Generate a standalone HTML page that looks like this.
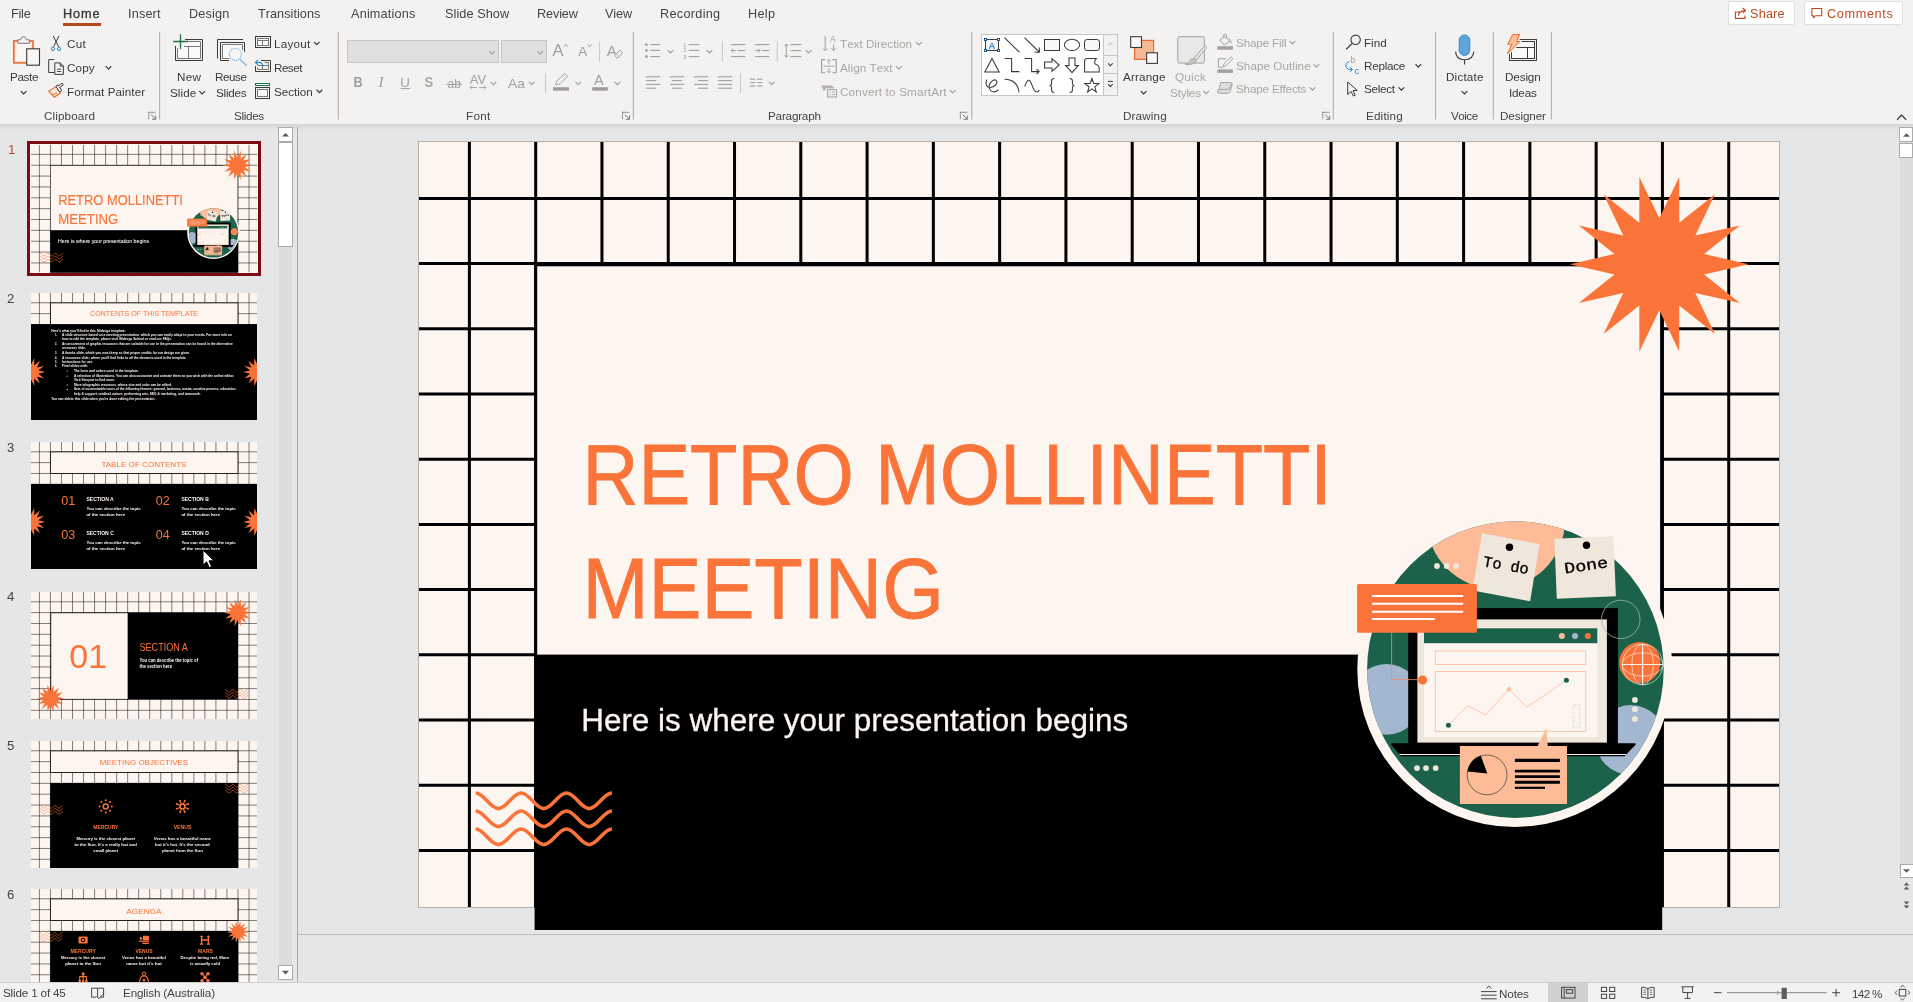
<!DOCTYPE html><html><head><meta charset="utf-8"><title>PowerPoint</title><style>
html,body{margin:0;padding:0}
body{width:1913px;height:1002px;position:relative;overflow:hidden;background:#e6e6e6;font-family:"Liberation Sans",sans-serif;}
.t{position:absolute;white-space:nowrap;line-height:16px;font-kerning:none;will-change:transform}
.abs{position:absolute}
svg{will-change:transform}
#ribbon{position:absolute;left:0;top:0;width:1913px;height:124px;background:#f3f2f1}
#rshadow{position:absolute;left:0;top:124px;width:1913px;height:6px;background:linear-gradient(#d4d4d4,#e6e6e6)}
#status{position:absolute;left:0;top:982px;width:1913px;height:20px;background:#f3f2f1;border-top:1px solid #d0d0d0;box-sizing:border-box}
.btn{position:absolute;top:1px;height:23.5px;background:#fff;border:1px solid #e1dfdd;border-radius:2px;box-sizing:border-box}
.sbx{position:absolute;background:#fff;border:1px solid #ababab;box-sizing:border-box}
.trk{position:absolute;background:#dcdcdc}
</style></head><body>
<div id="ribbon"></div><div id="rshadow"></div>
<div class="abs" style="left:62.9px;top:23.2px;width:38.1px;height:2.6px;background:#B7491F"></div>
<div class="btn" style="left:1728px;width:67px"></div><div class="btn" style="left:1804px;width:99px"></div>
<div class="abs" style="left:347.2px;top:40.1px;width:151.7px;height:22.6px;background:#e1dfdd;border:1px solid #c8c6c4;box-sizing:border-box"></div>
<div class="abs" style="left:501px;top:40.1px;width:45.9px;height:22.6px;background:#e1dfdd;border:1px solid #c8c6c4;box-sizing:border-box"></div>
<div class="abs" style="left:981.3px;top:34.2px;width:136.5px;height:61.7px;background:#fff;border:1px solid #c8c6c4;box-sizing:border-box"></div>
<div class="abs" style="left:1103.1px;top:35.2px;width:13.7px;height:59.7px;background:#f3f2f1"></div>
<div class="abs" style="left:1103.1px;top:55.2px;width:14.7px;height:18.5px;border:1px solid #c8c6c4;box-sizing:border-box"></div>
<div class="abs" style="left:1103.1px;top:74.4px;width:14.7px;height:21.5px;border:1px solid #c8c6c4;border-top:none;box-sizing:border-box"></div>
<div class="abs" style="left:1102.6px;top:34.2px;width:1px;height:61.7px;background:#c8c6c4"></div>
<div class="abs" style="left:297px;top:127px;width:1px;height:855px;background:#a9a9a9"></div>
<div class="abs" style="left:298px;top:934px;width:1615px;height:1px;background:#bdbdbd"></div>
<div class="abs" style="left:418px;top:141px;width:1362px;height:767px;background:#b4b0ae"></div>
<svg class="abs" style="left:419px;top:142px;overflow:visible" width="1360" height="765" viewBox="0 0 1360 765" font-family="Liberation Sans, sans-serif"><g id="s1"><rect width="1360" height="765" fill="#FCF5F0"/>
<path d="M50.40,0V765M116.68,0V765M182.96,0V765M249.24,0V765M315.52,0V765M381.80,0V765M448.08,0V765M514.36,0V765M580.64,0V765M646.92,0V765M713.20,0V765M779.48,0V765M845.76,0V765M912.04,0V765M978.32,0V765M1044.60,0V765M1110.88,0V765M1177.16,0V765M1243.44,0V765M1309.72,0V765M0,56.40H1360M0,121.60H1360M0,186.80H1360M0,252.00H1360M0,317.20H1360M0,382.40H1360M0,447.60H1360M0,512.80H1360M0,578.00H1360M0,643.20H1360M0,708.40H1360" stroke="#000" stroke-width="3" fill="none"/>
<rect x="115.2" y="120.1" width="1128.9" height="400" fill="#000"/>
<rect x="118.2" y="124.3" width="1122.9" height="390" fill="#FCF5F0"/>
<rect x="115.2" y="512.6" width="1128.9" height="252.6" fill="#000"/><rect x="115.6" y="765" width="1127.6" height="23" fill="#000"/>
<text x="163.4" y="361.9" font-size="85.3" fill="#FA7439" stroke="#FA7439" stroke-width="0.8" textLength="749.5" lengthAdjust="spacingAndGlyphs">RETRO MOLLINETTI</text>
<text x="163.4" y="475.6" font-size="85.3" fill="#FA7439" stroke="#FA7439" stroke-width="0.8" textLength="361.5" lengthAdjust="spacingAndGlyphs">MEETING</text>
<text x="162.2" y="588.9" font-size="30.8" fill="#FCF5F0" stroke="#FCF5F0" stroke-width="0.3" textLength="547" lengthAdjust="spacingAndGlyphs">Here is where your presentation begins</text>
<path d="M56.7,651.0 C65.0,651.0 71.1,666.6 79.4,666.6 C87.7,666.6 93.8,651.0 102.1,651.0 C110.4,651.0 116.5,666.6 124.8,666.6 C133.1,666.6 139.2,651.0 147.5,651.0 C155.8,651.0 161.9,666.6 170.2,666.6 C178.5,666.6 184.6,651.0 192.9,651.0" stroke="#FA7439" stroke-width="3.6" fill="none"/>
<path d="M56.7,669.0 C65.0,669.0 71.1,684.6 79.4,684.6 C87.7,684.6 93.8,669.0 102.1,669.0 C110.4,669.0 116.5,684.6 124.8,684.6 C133.1,684.6 139.2,669.0 147.5,669.0 C155.8,669.0 161.9,684.6 170.2,684.6 C178.5,684.6 184.6,669.0 192.9,669.0" stroke="#FA7439" stroke-width="3.6" fill="none"/>
<path d="M56.7,687.0 C65.0,687.0 71.1,702.6 79.4,702.6 C87.7,702.6 93.8,687.0 102.1,687.0 C110.4,687.0 116.5,702.6 124.8,702.6 C133.1,702.6 139.2,687.0 147.5,687.0 C155.8,687.0 161.9,702.6 170.2,702.6 C178.5,702.6 184.6,687.0 192.9,687.0" stroke="#FA7439" stroke-width="3.6" fill="none"/>
<polygon points="1329.7,122.2 1285.1,132.4 1320.8,161.0 1276.3,150.9 1296.0,192.1 1260.3,163.6 1260.2,209.4 1240.3,168.2 1220.4,209.4 1220.3,163.6 1184.6,192.1 1204.3,150.9 1159.8,161.0 1195.5,132.4 1150.9,122.2 1195.5,112.0 1159.8,83.4 1204.3,93.5 1184.6,52.3 1220.3,80.8 1220.4,35.0 1240.3,76.2 1260.2,35.0 1260.3,80.8 1296.0,52.3 1276.3,93.5 1320.8,83.4 1285.1,112.0" fill="#FA7439"/>
<circle cx="1095.8" cy="527.5" r="157.5" fill="#FCF5F0"/>
<clipPath id="gc"><circle cx="1096.4" cy="527.6" r="148.3"/></clipPath>
<circle cx="1096.4" cy="527.6" r="148.3" fill="#1C624A"/>
<g clip-path="url(#gc)"><circle cx="1077" cy="378" r="69" fill="#FDBB97"/><circle cx="967.5" cy="557.4" r="35.3" fill="#A3B8D0"/><circle cx="1211.6" cy="598" r="35" fill="#A3B8D0"/></g>
<circle cx="998" cy="626.1" r="2.9" fill="#EFE6DC"/>
<circle cx="1007" cy="626.1" r="2.9" fill="#EFE6DC"/>
<circle cx="1016.7" cy="626.1" r="2.9" fill="#EFE6DC"/>
<circle cx="1018" cy="424" r="2.9" fill="#EFE6DC"/>
<circle cx="1027.7" cy="424" r="2.9" fill="#EFE6DC"/>
<circle cx="1037.2" cy="424" r="2.9" fill="#EFE6DC"/>
<circle cx="1215.9" cy="557.9" r="2.9" fill="#EFE6DC"/>
<circle cx="1215.9" cy="567.2" r="2.9" fill="#EFE6DC"/>
<circle cx="1215.9" cy="576.9" r="2.9" fill="#EFE6DC"/>
<rect x="989.2" y="466.1" width="209.7" height="136" fill="#000"/>
<rect x="998.4" y="477.4" width="189.5" height="123.2" fill="#EFE6DC"/>
<rect x="1005" y="486.3" width="173.3" height="108.7" fill="#FCF5F0"/>
<rect x="1005" y="486.3" width="173.3" height="14.9" fill="#1C624A"/>
<circle cx="1142.9" cy="494.1" r="3" fill="#FDBB97"/>
<circle cx="1156" cy="494.1" r="3" fill="#A3B8D0"/>
<circle cx="1168.9" cy="494.1" r="3" fill="#FA7439"/>
<rect x="1016.3" y="509" width="150.5" height="13.6" fill="none" stroke="#FDBB97" stroke-width="0.8"/>
<rect x="1016.3" y="529.5" width="150.5" height="59.8" fill="none" stroke="#FDBB97" stroke-width="0.8"/>
<polyline points="1029.4,583.3 1048.9,563.5 1066.7,573.1 1090,547.2 1108,565.2 1147.4,538.3" fill="none" stroke="#FDBB97" stroke-width="0.8"/>
<circle cx="1029.4" cy="583.3" r="2.5" fill="#1C624A"/><circle cx="1147.4" cy="538.3" r="2.5" fill="#1C624A"/><circle cx="1090" cy="547.2" r="2.2" fill="#FDBB97"/>
<rect x="1154.3" y="563" width="6.4" height="22.9" fill="none" stroke="#FDBB97" stroke-width="0.6" stroke-dasharray="3 1.5"/>
<circle cx="1201.8" cy="477.4" r="19.2" fill="none" stroke="#9fb5ac" stroke-width="0.8"/>
<path d="M973.5,601.2H1215.5Q1217.5,601.6 1216,603.2L1205.6,614.2H982L972.6,603.2Q971.4,601.6 973.5,601.2Z" fill="#000"/>
<path d="M980.6,612.5H1207.2" stroke="#FCF5F0" stroke-width="1"/>
<circle cx="1220.8" cy="520.7" r="20.6" fill="#FA7439"/>
<g fill="none" stroke="#FCF5F0"><g stroke-width="0.7" opacity="0.85"><circle cx="1223.6" cy="522.5" r="20.3"/><ellipse cx="1223.6" cy="522.5" rx="10.8" ry="20.3"/><ellipse cx="1223.6" cy="522.5" rx="20.3" ry="11.6"/></g><path d="M1203.3,522.5H1243.9M1223.6,502.2V542.8" stroke-width="1.2"/></g>
<polygon points="1063,391.3 1120.6,402.1 1111.1,459.2 1053.5,448.4" fill="#EFE6DC"/>
<circle cx="1090.5" cy="405.3" r="3.7" fill="#000"/>
<text transform="translate(1063.6,424.2) rotate(10)" font-size="15.5" font-family="Liberation Mono, monospace" fill="#000" stroke="#000" stroke-width="0.35" textLength="46" lengthAdjust="spacingAndGlyphs">To do</text>
<polygon points="1135.3,396.8 1194.3,394.3 1196.9,454.2 1137.8,456.7" fill="#EFE6DC"/>
<circle cx="1167.5" cy="403.3" r="3.7" fill="#000"/>
<text transform="translate(1146,431.6) rotate(-8.5)" font-size="15.5" font-family="Liberation Mono, monospace" fill="#000" stroke="#000" stroke-width="0.35" textLength="44" lengthAdjust="spacingAndGlyphs">Done</text>
<rect x="938.1" y="442.1" width="119.8" height="48.6" rx="1.5" fill="#FA7439"/>
<path d="M953.1,454H1044.2M953.1,461.8H1044.2M953.1,469.8H1044.2M953.1,476.9H1015.8" stroke="#fff" stroke-width="2"/>
<path d="M972.6,490.7V537.6H999" stroke="#f98a52" stroke-width="0.8" fill="none"/>
<circle cx="1003.6" cy="538" r="4.6" fill="#FA7439"/>
<path d="M1040.9,604H1118.7L1127.3,585.9L1128.8,604H1148V661.9H1040.9Z" fill="#FDBB97"/>
<circle cx="1068.1" cy="632.9" r="19.9" fill="none" stroke="#33413c" stroke-width="0.7"/>
<path d="M1068.3,631.5L1048.5,629.4A19.9,19.9 0 0 1 1061.7,613.6Z" fill="#000"/>
<path d="M1095.9,618.4H1140.9" stroke="#000" stroke-width="3.4"/><path d="M1095.9,629.1H1140.9M1095.9,634.6H1140.9M1095.9,640.2H1140.9" stroke="#000" stroke-width="2.9"/><path d="M1095.9,645.8H1126" stroke="#000" stroke-width="2.2"/></g></svg>
<div class="trk" style="left:1900px;top:128px;width:13px;height:750px"></div>
<div class="sbx" style="left:1899.3px;top:127px;width:14px;height:15px"></div><div class="sbx" style="left:1899.3px;top:142.7px;width:14px;height:15.8px"></div>
<div class="sbx" style="left:1899.5px;top:864px;width:14px;height:13.5px"></div>
<div class="abs" style="left:26.9px;top:140.8px;width:234.4px;height:135.4px;background:#7B0C14"></div>
<div class="abs" style="left:29.9px;top:143.8px;width:228.4px;height:129.4px;background:#FCF5F0;overflow:hidden"><svg class="abs" style="left:1px;top:0.8px;overflow:visible" width="226.4" height="127.35" viewBox="0 0 1360 765"><use href="#s1"/></svg></div>
<svg class="abs" style="left:30.9px;top:293.4px" width="226.4" height="127.35" viewBox="30.9 293.4 226.4 127.35" font-family="Liberation Sans, sans-serif" ><rect x="30.9" y="293.4" width="226.4" height="127.35" fill="#FCF5F0"/><path d="M39.29,293.4v127.35M50.32,293.4v127.35M61.36,293.4v127.35M72.39,293.4v127.35M83.42,293.4v127.35M94.46,293.4v127.35M105.49,293.4v127.35M116.53,293.4v127.35M127.56,293.4v127.35M138.59,293.4v127.35M149.63,293.4v127.35M160.66,293.4v127.35M171.69,293.4v127.35M182.73,293.4v127.35M193.76,293.4v127.35M204.79,293.4v127.35M215.83,293.4v127.35M226.86,293.4v127.35M237.90,293.4v127.35M248.93,293.4v127.35M30.9,303.19h226.4M30.9,314.04h226.4M30.9,324.90h226.4M30.9,335.75h226.4M30.9,346.60h226.4M30.9,357.46h226.4M30.9,368.31h226.4M30.9,379.17h226.4M30.9,390.02h226.4M30.9,400.87h226.4M30.9,411.73h226.4" stroke="#1a1a1a" stroke-width="0.55" fill="none"/><rect x="30.9" y="324.50" width="226.4" height="96.25" fill="#000"/><rect x="50.33" y="303.29" width="187.56" height="21.51" fill="#FCF5F0" stroke="#000" stroke-width="0.8"/><text x="89.90" y="316.90" font-size="8.1" fill="#FA7439" font-weight="normal" textLength="108.10" lengthAdjust="spacingAndGlyphs">CONTENTS OF THIS TEMPLATE</text><polygon points="45.3,372.5 38.2,374.2 43.9,378.7 36.8,377.2 39.9,383.8 34.1,379.2 34.1,386.5 30.9,380.0 27.7,386.5 27.7,379.2 21.9,383.8 25.0,377.2 17.9,378.7 23.6,374.2 16.5,372.5 23.6,370.8 17.9,366.3 25.0,367.8 21.9,361.2 27.7,365.8 27.7,358.5 30.9,365.0 34.1,358.5 34.1,365.8 39.9,361.2 36.8,367.8 43.9,366.3 38.2,370.8" fill="#FA7439"/><polygon points="271.7,372.5 264.6,374.2 270.3,378.7 263.2,377.2 266.3,383.8 260.5,379.2 260.5,386.5 257.3,380.0 254.1,386.5 254.1,379.2 248.3,383.8 251.4,377.2 244.3,378.7 250.0,374.2 242.9,372.5 250.0,370.8 244.3,366.3 251.4,367.8 248.3,361.2 254.1,365.8 254.1,358.5 257.3,365.0 260.5,358.5 260.5,365.8 266.3,361.2 263.2,367.8 270.3,366.3 264.6,370.8" fill="#FA7439"/><text x="51.10" y="332.50" font-size="2.9" fill="#FCF5F0" font-weight="bold" textLength="74.50" lengthAdjust="spacingAndGlyphs">Here's what you'll find in this Slidesgo template:</text><text x="62.00" y="336.50" font-size="2.9" fill="#FCF5F0" font-weight="bold" textLength="170.00" lengthAdjust="spacingAndGlyphs">A slide structure based on a meeting presentation, which you can easily adapt to your needs. For more info on</text><text x="62.00" y="340.60" font-size="2.9" fill="#FCF5F0" font-weight="bold" textLength="109.90" lengthAdjust="spacingAndGlyphs">how to edit the template, please visit Slidesgo School or read our FAQs.</text><text x="62.00" y="345.50" font-size="2.9" fill="#FCF5F0" font-weight="bold" textLength="170.70" lengthAdjust="spacingAndGlyphs">An assortment of graphic resources that are suitable for use in the presentation can be found in the alternative</text><text x="62.00" y="349.60" font-size="2.9" fill="#FCF5F0" font-weight="bold" textLength="23.80" lengthAdjust="spacingAndGlyphs">resources slide.</text><text x="62.00" y="354.50" font-size="2.9" fill="#FCF5F0" font-weight="bold" textLength="128.00" lengthAdjust="spacingAndGlyphs">A thanks slide, which you must keep so that proper credits for our design are given.</text><text x="62.00" y="359.40" font-size="2.9" fill="#FCF5F0" font-weight="bold" textLength="124.40" lengthAdjust="spacingAndGlyphs">A resources slide, where you'll find links to all the elements used in the template.</text><text x="62.00" y="363.40" font-size="2.9" fill="#FCF5F0" font-weight="bold" textLength="31.00" lengthAdjust="spacingAndGlyphs">Instructions for use.</text><text x="62.00" y="367.40" font-size="2.9" fill="#FCF5F0" font-weight="bold" textLength="25.70" lengthAdjust="spacingAndGlyphs">Final slides with:</text><text x="73.80" y="372.40" font-size="2.9" fill="#FCF5F0" font-weight="bold" textLength="64.80" lengthAdjust="spacingAndGlyphs">The fonts and colors used in the template.</text><text x="73.80" y="377.50" font-size="2.9" fill="#FCF5F0" font-weight="bold" textLength="160.30" lengthAdjust="spacingAndGlyphs">A selection of illustrations. You can also customize and animate them as you wish with the online editor.</text><text x="73.80" y="381.40" font-size="2.9" fill="#FCF5F0" font-weight="bold" textLength="41.00" lengthAdjust="spacingAndGlyphs">Visit Storyset to find more.</text><text x="73.80" y="386.30" font-size="2.9" fill="#FCF5F0" font-weight="bold" textLength="98.10" lengthAdjust="spacingAndGlyphs">More infographic resources, whose size and color can be edited.</text><text x="73.80" y="390.80" font-size="2.9" fill="#FCF5F0" font-weight="bold" textLength="162.50" lengthAdjust="spacingAndGlyphs">Sets of customizable icons of the following themes: general, business, avatar, creative process, education,</text><text x="73.80" y="395.60" font-size="2.9" fill="#FCF5F0" font-weight="bold" textLength="126.80" lengthAdjust="spacingAndGlyphs">help &amp; support, medical, nature, performing arts, SEO &amp; marketing, and teamwork.</text><text x="51.10" y="400.50" font-size="2.9" fill="#FCF5F0" font-weight="bold" textLength="104.20" lengthAdjust="spacingAndGlyphs">You can delete this slide when you're done editing the presentation.</text><text x="55" y="336.5" font-size="2.6" fill="#FCF5F0" font-weight="bold">1.</text><text x="55" y="345.5" font-size="2.6" fill="#FCF5F0" font-weight="bold">2.</text><text x="55" y="354.5" font-size="2.6" fill="#FCF5F0" font-weight="bold">3.</text><text x="55" y="359.4" font-size="2.6" fill="#FCF5F0" font-weight="bold">4.</text><text x="55" y="363.4" font-size="2.6" fill="#FCF5F0" font-weight="bold">5.</text><text x="55" y="367.4" font-size="2.6" fill="#FCF5F0" font-weight="bold">6.</text><rect x="66.6" y="371.0" width="1" height="1" fill="#FCF5F0"/><rect x="66.6" y="376.1" width="1" height="1" fill="#FCF5F0"/><rect x="66.6" y="384.9" width="1" height="1" fill="#FCF5F0"/><rect x="66.6" y="389.4" width="1" height="1" fill="#FCF5F0"/></svg>
<svg class="abs" style="left:30.9px;top:442.3px" width="226.4" height="127.35" viewBox="30.9 442.3 226.4 127.35" font-family="Liberation Sans, sans-serif" ><rect x="30.9" y="442.3" width="226.4" height="127.35" fill="#FCF5F0"/><path d="M39.29,442.3v127.35M50.32,442.3v127.35M61.36,442.3v127.35M72.39,442.3v127.35M83.42,442.3v127.35M94.46,442.3v127.35M105.49,442.3v127.35M116.53,442.3v127.35M127.56,442.3v127.35M138.59,442.3v127.35M149.63,442.3v127.35M160.66,442.3v127.35M171.69,442.3v127.35M182.73,442.3v127.35M193.76,442.3v127.35M204.79,442.3v127.35M215.83,442.3v127.35M226.86,442.3v127.35M237.90,442.3v127.35M248.93,442.3v127.35M30.9,452.09h226.4M30.9,462.94h226.4M30.9,473.80h226.4M30.9,484.65h226.4M30.9,495.50h226.4M30.9,506.36h226.4M30.9,517.21h226.4M30.9,528.07h226.4M30.9,538.92h226.4M30.9,549.77h226.4M30.9,560.63h226.4" stroke="#1a1a1a" stroke-width="0.55" fill="none"/><rect x="30.9" y="484.25" width="226.4" height="85.40" fill="#000"/><rect x="50.33" y="452.19" width="187.56" height="21.51" fill="#FCF5F0" stroke="#000" stroke-width="0.8"/><text x="101.30" y="466.90" font-size="8.1" fill="#FA7439" font-weight="normal" textLength="85.10" lengthAdjust="spacingAndGlyphs">TABLE OF CONTENTS</text><polygon points="45.3,522.2 38.2,523.9 43.9,528.4 36.8,526.9 39.9,533.5 34.1,528.9 34.1,536.2 30.9,529.7 27.7,536.2 27.7,528.9 21.9,533.5 25.0,526.9 17.9,528.4 23.6,523.9 16.5,522.2 23.6,520.5 17.9,516.0 25.0,517.5 21.9,510.9 27.7,515.5 27.7,508.2 30.9,514.7 34.1,508.2 34.1,515.5 39.9,510.9 36.8,517.5 43.9,516.0 38.2,520.5" fill="#FA7439"/><polygon points="271.7,522.2 264.6,523.9 270.3,528.4 263.2,526.9 266.3,533.5 260.5,528.9 260.5,536.2 257.3,529.7 254.1,536.2 254.1,528.9 248.3,533.5 251.4,526.9 244.3,528.4 250.0,523.9 242.9,522.2 250.0,520.5 244.3,516.0 251.4,517.5 248.3,510.9 254.1,515.5 254.1,508.2 257.3,514.7 260.5,508.2 260.5,515.5 266.3,510.9 263.2,517.5 270.3,516.0 264.6,520.5" fill="#FA7439"/><text x="61.10" y="505.70" font-size="12.2" fill="#FA7439" font-weight="normal" textLength="14.00" lengthAdjust="spacingAndGlyphs">01</text><text x="155.60" y="505.70" font-size="12.2" fill="#FA7439" font-weight="normal" textLength="14.00" lengthAdjust="spacingAndGlyphs">02</text><text x="61.10" y="539.60" font-size="12.2" fill="#FA7439" font-weight="normal" textLength="14.00" lengthAdjust="spacingAndGlyphs">03</text><text x="155.60" y="539.60" font-size="12.2" fill="#FA7439" font-weight="normal" textLength="14.00" lengthAdjust="spacingAndGlyphs">04</text><text x="86.30" y="501.10" font-size="5.2" fill="#FCF5F0" font-weight="bold" textLength="27.40" lengthAdjust="spacingAndGlyphs">SECTION A</text><text x="86.30" y="510.30" font-size="4.3" fill="#FCF5F0" font-weight="bold" textLength="54.20" lengthAdjust="spacingAndGlyphs">You can describe the topic</text><text x="86.30" y="516.10" font-size="4.3" fill="#FCF5F0" font-weight="bold" textLength="38.70" lengthAdjust="spacingAndGlyphs">of the section here</text><text x="181.30" y="501.10" font-size="5.2" fill="#FCF5F0" font-weight="bold" textLength="27.40" lengthAdjust="spacingAndGlyphs">SECTION B</text><text x="181.30" y="510.30" font-size="4.3" fill="#FCF5F0" font-weight="bold" textLength="54.20" lengthAdjust="spacingAndGlyphs">You can describe the topic</text><text x="181.30" y="516.10" font-size="4.3" fill="#FCF5F0" font-weight="bold" textLength="38.70" lengthAdjust="spacingAndGlyphs">of the section here</text><text x="86.30" y="535.00" font-size="5.2" fill="#FCF5F0" font-weight="bold" textLength="27.40" lengthAdjust="spacingAndGlyphs">SECTION C</text><text x="86.30" y="544.20" font-size="4.3" fill="#FCF5F0" font-weight="bold" textLength="54.20" lengthAdjust="spacingAndGlyphs">You can describe the topic</text><text x="86.30" y="550.00" font-size="4.3" fill="#FCF5F0" font-weight="bold" textLength="38.70" lengthAdjust="spacingAndGlyphs">of the section here</text><text x="181.30" y="535.00" font-size="5.2" fill="#FCF5F0" font-weight="bold" textLength="27.40" lengthAdjust="spacingAndGlyphs">SECTION D</text><text x="181.30" y="544.20" font-size="4.3" fill="#FCF5F0" font-weight="bold" textLength="54.20" lengthAdjust="spacingAndGlyphs">You can describe the topic</text><text x="181.30" y="550.00" font-size="4.3" fill="#FCF5F0" font-weight="bold" textLength="38.70" lengthAdjust="spacingAndGlyphs">of the section here</text></svg>
<svg class="abs" style="left:30.9px;top:591.7px" width="226.4" height="127.35" viewBox="30.9 591.7 226.4 127.35" font-family="Liberation Sans, sans-serif" ><rect x="30.9" y="591.7" width="226.4" height="127.35" fill="#FCF5F0"/><path d="M39.29,591.7v127.35M50.32,591.7v127.35M61.36,591.7v127.35M72.39,591.7v127.35M83.42,591.7v127.35M94.46,591.7v127.35M105.49,591.7v127.35M116.53,591.7v127.35M127.56,591.7v127.35M138.59,591.7v127.35M149.63,591.7v127.35M160.66,591.7v127.35M171.69,591.7v127.35M182.73,591.7v127.35M193.76,591.7v127.35M204.79,591.7v127.35M215.83,591.7v127.35M226.86,591.7v127.35M237.90,591.7v127.35M248.93,591.7v127.35M30.9,601.49h226.4M30.9,612.34h226.4M30.9,623.20h226.4M30.9,634.05h226.4M30.9,644.90h226.4M30.9,655.76h226.4M30.9,666.61h226.4M30.9,677.47h226.4M30.9,688.32h226.4M30.9,699.17h226.4M30.9,710.03h226.4" stroke="#1a1a1a" stroke-width="0.55" fill="none"/><rect x="50.33" y="612.14" width="187.56" height="87.03" fill="#000"/><rect x="51.08" y="612.89" width="76.48" height="85.73" fill="#FCF5F0"/><text x="69.20" y="667.30" font-size="33" fill="#FA7439" font-weight="normal" textLength="37.80" lengthAdjust="spacingAndGlyphs">01</text><text x="139.40" y="651.10" font-size="10" fill="#FA7439" font-weight="normal" textLength="48.40" lengthAdjust="spacingAndGlyphs">SECTION A</text><text x="139.40" y="661.80" font-size="4.5" fill="#FCF5F0" font-weight="bold" textLength="58.60" lengthAdjust="spacingAndGlyphs">You can describe the topic of</text><text x="139.40" y="667.90" font-size="4.5" fill="#FCF5F0" font-weight="bold" textLength="32.50" lengthAdjust="spacingAndGlyphs">the section here</text><polygon points="251.6,612.4 244.7,614.0 250.2,618.4 243.4,616.9 246.4,623.3 240.8,618.9 240.8,626.0 237.7,619.6 234.6,626.0 234.6,618.9 229.0,623.3 232.0,616.9 225.2,618.4 230.7,614.0 223.8,612.4 230.7,610.8 225.2,606.4 232.0,607.9 229.0,601.5 234.6,605.9 234.6,598.8 237.7,605.2 240.8,598.8 240.8,605.9 246.4,601.5 243.4,607.9 250.2,606.4 244.7,610.8" fill="#FA7439"/><polygon points="64.3,698.0 57.4,699.6 62.9,704.0 56.1,702.5 59.1,708.9 53.5,704.5 53.5,711.6 50.4,705.2 47.3,711.6 47.3,704.5 41.7,708.9 44.7,702.5 37.9,704.0 43.4,699.6 36.5,698.0 43.4,696.4 37.9,692.0 44.7,693.5 41.7,687.1 47.3,691.5 47.3,684.4 50.4,690.8 53.5,684.4 53.5,691.5 59.1,687.1 56.1,693.5 62.9,692.0 57.4,696.4" fill="#FA7439"/><path d="M225.2,689.3 C226.6,689.3 227.6,691.9 229.0,691.9 C230.4,691.9 231.4,689.3 232.8,689.3 C234.1,689.3 235.2,691.9 236.5,691.9 C237.9,691.9 238.9,689.3 240.3,689.3 C241.7,689.3 242.7,691.9 244.1,691.9 C245.5,691.9 246.5,689.3 247.9,689.3" stroke="#FA7439" stroke-width="0.6" fill="none"/><path d="M225.2,692.3 C226.6,692.3 227.6,694.9 229.0,694.9 C230.4,694.9 231.4,692.3 232.8,692.3 C234.1,692.3 235.2,694.9 236.5,694.9 C237.9,694.9 238.9,692.3 240.3,692.3 C241.7,692.3 242.7,694.9 244.1,694.9 C245.5,694.9 246.5,692.3 247.9,692.3" stroke="#FA7439" stroke-width="0.6" fill="none"/><path d="M225.2,695.3 C226.6,695.3 227.6,697.9 229.0,697.9 C230.4,697.9 231.4,695.3 232.8,695.3 C234.1,695.3 235.2,697.9 236.5,697.9 C237.9,697.9 238.9,695.3 240.3,695.3 C241.7,695.3 242.7,697.9 244.1,697.9 C245.5,697.9 246.5,695.3 247.9,695.3" stroke="#FA7439" stroke-width="0.6" fill="none"/></svg>
<svg class="abs" style="left:30.9px;top:740.7px" width="226.4" height="127.35" viewBox="30.9 740.7 226.4 127.35" font-family="Liberation Sans, sans-serif" ><rect x="30.9" y="740.7" width="226.4" height="127.35" fill="#FCF5F0"/><path d="M39.29,740.7v127.35M50.32,740.7v127.35M61.36,740.7v127.35M72.39,740.7v127.35M83.42,740.7v127.35M94.46,740.7v127.35M105.49,740.7v127.35M116.53,740.7v127.35M127.56,740.7v127.35M138.59,740.7v127.35M149.63,740.7v127.35M160.66,740.7v127.35M171.69,740.7v127.35M182.73,740.7v127.35M193.76,740.7v127.35M204.79,740.7v127.35M215.83,740.7v127.35M226.86,740.7v127.35M237.90,740.7v127.35M248.93,740.7v127.35M30.9,750.49h226.4M30.9,761.34h226.4M30.9,772.20h226.4M30.9,783.05h226.4M30.9,793.90h226.4M30.9,804.76h226.4M30.9,815.61h226.4M30.9,826.47h226.4M30.9,837.32h226.4M30.9,848.17h226.4M30.9,859.03h226.4" stroke="#1a1a1a" stroke-width="0.55" fill="none"/><rect x="50.08" y="782.65" width="188.06" height="85.40" fill="#000"/><rect x="50.33" y="750.59" width="187.56" height="21.51" fill="#FCF5F0" stroke="#000" stroke-width="0.8"/><text x="99.60" y="765.10" font-size="8.1" fill="#FA7439" font-weight="normal" textLength="88.50" lengthAdjust="spacingAndGlyphs">MEETING OBJECTIVES</text><path d="M225.2,784.1 C226.6,784.1 227.6,786.7 229.0,786.7 C230.4,786.7 231.4,784.1 232.8,784.1 C234.1,784.1 235.2,786.7 236.5,786.7 C237.9,786.7 238.9,784.1 240.3,784.1 C241.7,784.1 242.7,786.7 244.1,786.7 C245.5,786.7 246.5,784.1 247.9,784.1" stroke="#FA7439" stroke-width="0.6" fill="none"/><path d="M225.2,787.1 C226.6,787.1 227.6,789.7 229.0,789.7 C230.4,789.7 231.4,787.1 232.8,787.1 C234.1,787.1 235.2,789.7 236.5,789.7 C237.9,789.7 238.9,787.1 240.3,787.1 C241.7,787.1 242.7,789.7 244.1,789.7 C245.5,789.7 246.5,787.1 247.9,787.1" stroke="#FA7439" stroke-width="0.6" fill="none"/><path d="M225.2,790.1 C226.6,790.1 227.6,792.7 229.0,792.7 C230.4,792.7 231.4,790.1 232.8,790.1 C234.1,790.1 235.2,792.7 236.5,792.7 C237.9,792.7 238.9,790.1 240.3,790.1 C241.7,790.1 242.7,792.7 244.1,792.7 C245.5,792.7 246.5,790.1 247.9,790.1" stroke="#FA7439" stroke-width="0.6" fill="none"/><path d="M40.0,805.3 C41.4,805.3 42.4,807.9 43.8,807.9 C45.2,807.9 46.2,805.3 47.6,805.3 C48.9,805.3 50.0,807.9 51.3,807.9 C52.7,807.9 53.7,805.3 55.1,805.3 C56.5,805.3 57.5,807.9 58.9,807.9 C60.3,807.9 61.3,805.3 62.7,805.3" stroke="#FA7439" stroke-width="0.6" fill="none"/><path d="M40.0,808.3 C41.4,808.3 42.4,810.9 43.8,810.9 C45.2,810.9 46.2,808.3 47.6,808.3 C48.9,808.3 50.0,810.9 51.3,810.9 C52.7,810.9 53.7,808.3 55.1,808.3 C56.5,808.3 57.5,810.9 58.9,810.9 C60.3,810.9 61.3,808.3 62.7,808.3" stroke="#FA7439" stroke-width="0.6" fill="none"/><path d="M40.0,811.3 C41.4,811.3 42.4,813.9 43.8,813.9 C45.2,813.9 46.2,811.3 47.6,811.3 C48.9,811.3 50.0,813.9 51.3,813.9 C52.7,813.9 53.7,811.3 55.1,811.3 C56.5,811.3 57.5,813.9 58.9,813.9 C60.3,813.9 61.3,811.3 62.7,811.3" stroke="#FA7439" stroke-width="0.6" fill="none"/><circle cx="105.6" cy="806.1" r="2.45" fill="none" stroke="#FA7439" stroke-width="1.44"/><circle cx="111.72" cy="806.10" r="1.01" fill="#FA7439"/><circle cx="109.93" cy="810.43" r="1.01" fill="#FA7439"/><circle cx="105.60" cy="812.22" r="1.01" fill="#FA7439"/><circle cx="101.27" cy="810.43" r="1.01" fill="#FA7439"/><circle cx="99.48" cy="806.10" r="1.01" fill="#FA7439"/><circle cx="101.27" cy="801.77" r="1.01" fill="#FA7439"/><circle cx="105.60" cy="799.98" r="1.01" fill="#FA7439"/><circle cx="109.93" cy="801.77" r="1.01" fill="#FA7439"/><circle cx="182.3" cy="806.1" r="2.45" fill="none" stroke="#FA7439" stroke-width="1.44"/><circle cx="187.95" cy="808.44" r="1.01" fill="#FA7439"/><path d="M184.96,807.20L187.62,808.30" stroke="#FA7439" stroke-width="1.01"/><circle cx="184.64" cy="811.75" r="1.01" fill="#FA7439"/><path d="M183.40,808.76L184.50,811.42" stroke="#FA7439" stroke-width="1.01"/><circle cx="179.96" cy="811.75" r="1.01" fill="#FA7439"/><path d="M181.20,808.76L180.10,811.42" stroke="#FA7439" stroke-width="1.01"/><circle cx="176.65" cy="808.44" r="1.01" fill="#FA7439"/><path d="M179.64,807.20L176.98,808.30" stroke="#FA7439" stroke-width="1.01"/><circle cx="176.65" cy="803.76" r="1.01" fill="#FA7439"/><path d="M179.64,805.00L176.98,803.90" stroke="#FA7439" stroke-width="1.01"/><circle cx="179.96" cy="800.45" r="1.01" fill="#FA7439"/><path d="M181.20,803.44L180.10,800.78" stroke="#FA7439" stroke-width="1.01"/><circle cx="184.64" cy="800.45" r="1.01" fill="#FA7439"/><path d="M183.40,803.44L184.50,800.78" stroke="#FA7439" stroke-width="1.01"/><circle cx="187.95" cy="803.76" r="1.01" fill="#FA7439"/><path d="M184.96,805.00L187.62,803.90" stroke="#FA7439" stroke-width="1.01"/><text x="93.10" y="829.00" font-size="5.4" fill="#FA7439" font-weight="bold" textLength="25.30" lengthAdjust="spacingAndGlyphs">MERCURY</text><text x="173.60" y="829.00" font-size="5.4" fill="#FA7439" font-weight="bold" textLength="17.80" lengthAdjust="spacingAndGlyphs">VENUS</text><text x="76.30" y="840.00" font-size="4.3" fill="#FCF5F0" font-weight="bold" textLength="58.60" lengthAdjust="spacingAndGlyphs">Mercury is the closest planet</text><text x="74.50" y="845.80" font-size="4.3" fill="#FCF5F0" font-weight="bold" textLength="62.20" lengthAdjust="spacingAndGlyphs">to the Sun. It's a really hot and</text><text x="93.15" y="851.70" font-size="4.3" fill="#FCF5F0" font-weight="bold" textLength="24.90" lengthAdjust="spacingAndGlyphs">small planet</text><text x="153.75" y="840.00" font-size="4.3" fill="#FCF5F0" font-weight="bold" textLength="57.10" lengthAdjust="spacingAndGlyphs">Venus has a beautiful name</text><text x="154.95" y="845.80" font-size="4.3" fill="#FCF5F0" font-weight="bold" textLength="54.70" lengthAdjust="spacingAndGlyphs">but it's hot. It's the second</text><text x="161.85" y="851.70" font-size="4.3" fill="#FCF5F0" font-weight="bold" textLength="40.90" lengthAdjust="spacingAndGlyphs">planet from the Sun</text></svg>
<svg class="abs" style="left:30.9px;top:889.4px" width="226.4" height="92.60000000000002" viewBox="30.9 889.4 226.4 92.60000000000002" font-family="Liberation Sans, sans-serif" ><rect x="30.9" y="889.4" width="226.4" height="127.35" fill="#FCF5F0"/><path d="M39.29,889.4v127.35M50.32,889.4v127.35M61.36,889.4v127.35M72.39,889.4v127.35M83.42,889.4v127.35M94.46,889.4v127.35M105.49,889.4v127.35M116.53,889.4v127.35M127.56,889.4v127.35M138.59,889.4v127.35M149.63,889.4v127.35M160.66,889.4v127.35M171.69,889.4v127.35M182.73,889.4v127.35M193.76,889.4v127.35M204.79,889.4v127.35M215.83,889.4v127.35M226.86,889.4v127.35M237.90,889.4v127.35M248.93,889.4v127.35M30.9,899.19h226.4M30.9,910.04h226.4M30.9,920.90h226.4M30.9,931.75h226.4M30.9,942.60h226.4M30.9,953.46h226.4M30.9,964.31h226.4M30.9,975.17h226.4M30.9,986.02h226.4M30.9,996.87h226.4M30.9,1007.73h226.4" stroke="#1a1a1a" stroke-width="0.55" fill="none"/><rect x="50.08" y="931.35" width="188.06" height="85.40" fill="#000"/><rect x="50.33" y="899.29" width="187.56" height="21.51" fill="#FCF5F0" stroke="#000" stroke-width="0.8"/><text x="126.10" y="914.10" font-size="8.1" fill="#FA7439" font-weight="normal" textLength="35.30" lengthAdjust="spacingAndGlyphs">AGENDA</text><polygon points="249.0,932.3 243.6,933.6 247.9,937.1 242.5,935.9 244.9,940.9 240.5,937.5 240.4,943.0 238.0,938.0 235.6,943.0 235.5,937.5 231.1,940.9 233.5,935.9 228.1,937.1 232.4,933.6 227.0,932.3 232.4,931.0 228.1,927.5 233.5,928.7 231.1,923.7 235.5,927.1 235.6,921.6 238.0,926.6 240.4,921.6 240.5,927.1 244.9,923.7 242.5,928.7 247.9,927.5 243.6,931.0" fill="#FA7439"/><path d="M39.6,933.0 C41.0,933.0 42.0,935.6 43.4,935.6 C44.8,935.6 45.8,933.0 47.2,933.0 C48.5,933.0 49.6,935.6 50.9,935.6 C52.3,935.6 53.3,933.0 54.7,933.0 C56.1,933.0 57.1,935.6 58.5,935.6 C59.9,935.6 60.9,933.0 62.3,933.0" stroke="#FA7439" stroke-width="0.6" fill="none"/><path d="M39.6,936.0 C41.0,936.0 42.0,938.6 43.4,938.6 C44.8,938.6 45.8,936.0 47.2,936.0 C48.5,936.0 49.6,938.6 50.9,938.6 C52.3,938.6 53.3,936.0 54.7,936.0 C56.1,936.0 57.1,938.6 58.5,938.6 C59.9,938.6 60.9,936.0 62.3,936.0" stroke="#FA7439" stroke-width="0.6" fill="none"/><path d="M39.6,939.0 C41.0,939.0 42.0,941.6 43.4,941.6 C44.8,941.6 45.8,939.0 47.2,939.0 C48.5,939.0 49.6,941.6 50.9,941.6 C52.3,941.6 53.3,939.0 54.7,939.0 C56.1,939.0 57.1,941.6 58.5,941.6 C59.9,941.6 60.9,939.0 62.3,939.0" stroke="#FA7439" stroke-width="0.6" fill="none"/><rect x="78.4" y="936.8" width="9.2" height="7.2" rx="1" fill="#FA7439"/><circle cx="83" cy="940.4" r="2.2" fill="#000"/><circle cx="83" cy="940.4" r="1.2" fill="#FA7439"/><path d="M83,972.6V979.6M79.6,982.2V977.0H86.4V982.2" stroke="#FA7439" stroke-width="1.1" fill="none"/><circle cx="83" cy="974.4" r="1.5" fill="#FA7439"/><circle cx="79.6" cy="981.2" r="1.3" fill="#FA7439"/><circle cx="83" cy="981.2" r="1.3" fill="#FA7439"/><circle cx="86.4" cy="981.2" r="1.3" fill="#FA7439"/><rect x="142.9" y="936.1999999999999" width="6" height="4.6" fill="#FA7439"/><circle cx="140.9" cy="938.8" r="1.3" fill="#FA7439"/><rect x="138.9" y="941.0" width="10" height="1.2" fill="#FA7439"/><rect x="142.3" y="943.0" width="6.4" height="1.4" fill="#FA7439"/><circle cx="143.9" cy="974.2" r="1.7" fill="none" stroke="#FA7439" stroke-width="1"/><path d="M139.5,982.2Q139.9,976.2 143.9,976.2Q147.9,976.2 148.3,982.2" stroke="#FA7439" stroke-width="1.2" fill="none"/><circle cx="143.9" cy="980.6" r="1.3" fill="#FA7439"/><path d="M201.5,936.4V944.4M208.3,936.4V944.4M201.5,940.4H208.3M199.9,944.6H203.1M206.70000000000002,944.6H209.9" stroke="#FA7439" stroke-width="1.3" fill="none"/><circle cx="201.5" cy="937.0" r="1.2" fill="#FA7439"/><circle cx="208.3" cy="937.0" r="1.2" fill="#FA7439"/><circle cx="201.9" cy="974.2" r="1.7" fill="#FA7439"/><circle cx="207.9" cy="974.2" r="1.7" fill="#FA7439"/><circle cx="201.9" cy="981.0" r="1.7" fill="#FA7439"/><circle cx="207.9" cy="981.0" r="1.7" fill="#FA7439"/><circle cx="204.9" cy="977.6" r="1.7" fill="#FA7439"/><path d="M201.9,974.2L207.9,981.0M207.9,974.2L201.9,981.0" stroke="#FA7439" stroke-width="1"/><text x="70.30" y="953.00" font-size="5.4" fill="#FA7439" font-weight="bold" textLength="25.50" lengthAdjust="spacingAndGlyphs">MERCURY</text><text x="135.30" y="953.00" font-size="5.4" fill="#FA7439" font-weight="bold" textLength="17.30" lengthAdjust="spacingAndGlyphs">VENUS</text><text x="198.00" y="953.00" font-size="5.4" fill="#FA7439" font-weight="bold" textLength="14.80" lengthAdjust="spacingAndGlyphs">MARS</text><text x="60.80" y="959.80" font-size="4.3" fill="#FCF5F0" font-weight="bold" textLength="44.40" lengthAdjust="spacingAndGlyphs">Mercury is the closest</text><text x="65.05" y="965.70" font-size="4.3" fill="#FCF5F0" font-weight="bold" textLength="35.90" lengthAdjust="spacingAndGlyphs">planet to the Sun</text><text x="122.00" y="959.80" font-size="4.3" fill="#FCF5F0" font-weight="bold" textLength="43.80" lengthAdjust="spacingAndGlyphs">Venus has a beautiful</text><text x="126.05" y="965.70" font-size="4.3" fill="#FCF5F0" font-weight="bold" textLength="35.70" lengthAdjust="spacingAndGlyphs">name but it's hot</text><text x="180.40" y="959.80" font-size="4.3" fill="#FCF5F0" font-weight="bold" textLength="49.00" lengthAdjust="spacingAndGlyphs">Despite being red, Mars</text><text x="189.90" y="965.70" font-size="4.3" fill="#FCF5F0" font-weight="bold" textLength="30.00" lengthAdjust="spacingAndGlyphs">is actually cold</text></svg>
<svg class="abs" style="left:201px;top:548px" width="16" height="22" viewBox="0 0 16 22"><path d="M2,2V17.2L5.6,13.8L8.2,19.6L10.6,18.6L8,12.8H12.8Z" fill="#fff" stroke="#000" stroke-width="1" stroke-linejoin="round"/></svg>
<div class="trk" style="left:279px;top:128px;width:13px;height:852px"></div>
<div class="sbx" style="left:278.3px;top:127.2px;width:14.5px;height:14.6px"></div><div class="sbx" style="left:278.3px;top:142.4px;width:14.5px;height:104.4px"></div>
<div class="sbx" style="left:278.3px;top:965.3px;width:14.5px;height:14.4px"></div>
<div id="status"></div>
<div class="abs" style="left:1548.3px;top:983px;width:39.6px;height:19px;background:#d2d0ce"></div>
<svg class="abs" style="left:0;top:0" width="1913" height="130" viewBox="0 0 1913 130" font-family="Liberation Sans, sans-serif"><path d="M159.6,32V119.5" stroke="#b3afad" stroke-width="1.1"/>
<path d="M338.3,32V119.5" stroke="#b3afad" stroke-width="1.1"/>
<path d="M633.3,32V119.5" stroke="#b3afad" stroke-width="1.1"/>
<path d="M971.8,32V119.5" stroke="#b3afad" stroke-width="1.1"/>
<path d="M1333.3,32V119.5" stroke="#b3afad" stroke-width="1.1"/>
<path d="M1435.5,32V119.5" stroke="#b3afad" stroke-width="1.1"/>
<path d="M1493.3,32V119.5" stroke="#b3afad" stroke-width="1.1"/>
<path d="M1551.4,32V119.5" stroke="#b3afad" stroke-width="1.1"/>
<path d="M599.6,41.3V61.8" stroke="#c8c6c4" stroke-width="1"/>
<path d="M545.6,73.3V92.9" stroke="#c8c6c4" stroke-width="1"/>
<path d="M722.4,41V61.8" stroke="#c8c6c4" stroke-width="1"/>
<path d="M777.2,41V61.8" stroke="#c8c6c4" stroke-width="1"/>
<path d="M740.6,73.3V93" stroke="#c8c6c4" stroke-width="1"/>
<path d="M148.2,112.3H155.7M148.7,111.8V119.3" stroke="#777" stroke-width="1" fill="none" opacity="0.75"/><path d="M151.2,114.8L155.5,119.1M155.7,115.6V119.3H152.0" stroke="#777" stroke-width="1" fill="none"/>
<path d="M622,112.3H629.5M622.5,111.8V119.3" stroke="#777" stroke-width="1" fill="none" opacity="0.75"/><path d="M625,114.8L629.3,119.1M629.5,115.6V119.3H625.8" stroke="#777" stroke-width="1" fill="none"/>
<path d="M959.8,112.3H967.3M960.3,111.8V119.3" stroke="#777" stroke-width="1" fill="none" opacity="0.75"/><path d="M962.8,114.8L967.0999999999999,119.1M967.3,115.6V119.3H963.5999999999999" stroke="#777" stroke-width="1" fill="none"/>
<path d="M1322.2,112.3H1329.7M1322.7,111.8V119.3" stroke="#777" stroke-width="1" fill="none" opacity="0.75"/><path d="M1325.2,114.8L1329.5,119.1M1329.7,115.6V119.3H1326.0" stroke="#777" stroke-width="1" fill="none"/>
<rect x="13.8" y="40.9" width="19.2" height="22" fill="#fbe3d4" stroke="#ED6C30" stroke-width="1.6"/>
<rect x="16.3" y="43.2" width="14.2" height="18" fill="#f7f6f5"/>
<path d="M17.8,43.3V39.8H20.6Q21,36.6 23.5,36.6Q26,36.6 26.4,39.8H29.3V43.3Z" fill="#f7f6f5" stroke="#797775" stroke-width="1"/>
<rect x="26.7" y="48.8" width="12.8" height="16.4" fill="#f7f6f5" stroke="#3b3a39" stroke-width="1.1"/>
<path d="M20.80,91.05L23.60,93.95L26.40,91.05" fill="none" stroke="#3b3a39" stroke-width="1.2"/>
<path d="M53.2,35.8L58.6,46.8M59,35.8L53.6,46.8" stroke="#3b3a39" stroke-width="1" fill="none"/>
<circle cx="52.9" cy="48.9" r="1.7" fill="none" stroke="#2E86C7" stroke-width="1"/><circle cx="59.1" cy="48.9" r="1.7" fill="none" stroke="#2E86C7" stroke-width="1"/>
<path d="M54.3,59.6H48.7V72.5H54" fill="none" stroke="#3b3a39" stroke-width="1"/>
<path d="M54.8,62.9H60.2L63.4,66.1V74.4H54.8Z" fill="#f7f6f5" stroke="#3b3a39" stroke-width="1"/><path d="M60.2,62.9V66.1H63.4" fill="none" stroke="#3b3a39" stroke-width="1"/><path d="M57,69.2H61.3M57,71.5H61.3" stroke="#3b3a39" stroke-width="0.9"/>
<path d="M105.70,66.15L108.50,69.05L111.30,66.15" fill="none" stroke="#3b3a39" stroke-width="1.2"/>
<path d="M48.6,91.2L56.2,86.6L60.6,93L54.2,97.2Z" fill="#fbe3d4" stroke="#ED6C30" stroke-width="1.1" stroke-linejoin="round"/><path d="M51.5,94.5L57,93.5" stroke="#ED6C30" stroke-width="0.9"/>
<path d="M55.8,86.2L58.2,84.9L61.8,90.6L59.6,92Z" fill="#f7f6f5" stroke="#3b3a39" stroke-width="1"/><path d="M58.6,85.6L62.2,83.2L63.3,84.9L59.7,87.4" fill="#f7f6f5" stroke="#3b3a39" stroke-width="1"/>
<path d="M185,39.5H202.5V60.5H175.5V46" fill="none" stroke="#3b3a39" stroke-width="1"/>
<path d="M185,41.5H200.5V58.5H177.5V48" fill="#fafafa" stroke="#797775" stroke-width="1"/><path d="M184,46.5H200.5M188.5,46.5V58.5" stroke="#797775" stroke-width="1"/>
<path d="M173.2,41.5H187.9M180.5,34.2V48.9" stroke="#1e7145" stroke-width="1.3"/>
<path d="M199.30,91.05L202.10,93.95L204.90,91.05" fill="none" stroke="#3b3a39" stroke-width="1.2"/>
<path d="M217.5,58.6V39.5H243" fill="none" stroke="#3b3a39" stroke-width="1"/>
<path d="M229,60.5H220.5V42.5H244.5V52" fill="none" stroke="#3b3a39" stroke-width="1"/>
<path d="M229,58.5H222.5V44.5H242.5V50" fill="#fafafa" stroke="#797775" stroke-width="1"/>
<circle cx="235.3" cy="54.3" r="6" fill="#f7f6f5" stroke="#7FB7E6" stroke-width="1.2" stroke-dasharray="1.4 0.9"/><path d="M239.8,59.2L246.6,65.6" stroke="#7FB7E6" stroke-width="1.4"/>
<rect x="255.5" y="36.5" width="15" height="11" fill="none" stroke="#3b3a39" stroke-width="1"/><rect x="257.5" y="38.5" width="11" height="7" fill="#fafafa" stroke="#797775" stroke-width="1"/><path d="M257.5,40.5H268.5M262.5,40.5V45.5" stroke="#797775" stroke-width="1"/>
<path d="M313.90,41.85L316.70,44.75L319.50,41.85" fill="none" stroke="#3b3a39" stroke-width="1.2"/>
<path d="M261,60.5H270.5V71.5H255.5V66" fill="none" stroke="#3b3a39" stroke-width="1"/><path d="M264.5,62.5H268.5V69.5H257.5V67.6" fill="none" stroke="#797775" stroke-width="1"/><path d="M257.5,65.5H268.5M262.5,65.5V69.5" stroke="#797775" stroke-width="1"/>
<path d="M255.6,62.4H259.3Q262.6,62.6 262.8,66.4" fill="none" stroke="#2E86C7" stroke-width="1.1"/><path d="M258,59.9L255.4,62.4L258,64.9" fill="none" stroke="#2E86C7" stroke-width="1.1"/>
<rect x="255.5" y="83.5" width="14" height="2" fill="#fafafa" stroke="#1e7145" stroke-width="1"/><rect x="255.5" y="87.5" width="14" height="11" fill="none" stroke="#3b3a39" stroke-width="1"/><rect x="257.5" y="89.5" width="10" height="7" fill="#fafafa" stroke="#797775" stroke-width="1"/>
<path d="M316.70,89.75L319.50,92.65L322.30,89.75" fill="none" stroke="#3b3a39" stroke-width="1.2"/>
<path d="M489.30,51.05L492.10,53.95L494.90,51.05" fill="none" stroke="#a19f9d" stroke-width="1.1"/>
<path d="M537.50,51.05L540.30,53.95L543.10,51.05" fill="none" stroke="#a19f9d" stroke-width="1.1"/>
<text x="552.6" y="56.4" font-size="16.5" fill="#a19f9d">A</text><path d="M563.80,46.70L565.80,44.50L567.80,46.70" fill="none" stroke="#a19f9d" stroke-width="1"/>
<text x="578.3" y="56.4" font-size="13.5" fill="#a19f9d">A</text><path d="M587.60,44.50L589.60,46.70L591.60,44.50" fill="none" stroke="#a19f9d" stroke-width="1"/>
<text x="606.8" y="55.5" font-size="15" fill="#a19f9d">A</text><path d="M614.6,55.6L619.8,50.2L622.6,52.9L617.4,58.4Z" fill="#f3f2f1" stroke="#a19f9d" stroke-width="1"/><path d="M616.3,54L619,56.6" stroke="#a19f9d" stroke-width="0.8"/>
<text x="353.4" y="87" font-size="14.3" font-weight="bold" fill="#a19f9d" textLength="9.2" lengthAdjust="spacingAndGlyphs">B</text>
<text x="378.6" y="87" font-size="15" font-style="italic" font-family="Liberation Serif, serif" fill="#a19f9d">I</text>
<text x="400.2" y="86.9" font-size="13.6" fill="#a19f9d" textLength="9.6" lengthAdjust="spacingAndGlyphs">U</text><path d="M400.7,88.6H410" stroke="#a19f9d" stroke-width="1"/>
<text x="424.6" y="87" font-size="14.3" fill="#a19f9d" font-weight="bold" opacity="0.9" textLength="8.6" lengthAdjust="spacingAndGlyphs">S</text>
<text x="447.6" y="87.7" font-size="12" fill="#a19f9d">ab</text><path d="M446.2,84.3H461.8" stroke="#a19f9d" stroke-width="1"/>
<text x="469.8" y="83.5" font-size="12" fill="#a19f9d" textLength="16.4" lengthAdjust="spacingAndGlyphs">AV</text><path d="M470.2,87.5H477M472.2,85.5L470.2,87.5L472.2,89.5M479.2,87.5H485.9M483.9,85.5L485.9,87.5L483.9,89.5" stroke="#a19f9d" stroke-width="0.9" fill="none"/><path d="M490.70,81.85L493.50,84.75L496.30,81.85" fill="none" stroke="#a19f9d" stroke-width="1.2"/>
<text x="508" y="88" font-size="13" fill="#a19f9d" textLength="16.8" lengthAdjust="spacingAndGlyphs">Aa</text><path d="M528.90,81.85L531.70,84.75L534.50,81.85" fill="none" stroke="#a19f9d" stroke-width="1.2"/>
<path d="M555.5,84.6L557.2,80.6L564.8,73.6L567.6,76.2L560.2,83.6L556.4,85.2Z" fill="none" stroke="#a19f9d" stroke-width="1"/><rect x="553" y="87.2" width="16" height="3.5" fill="#a19f9d"/><path d="M575.50,81.85L578.30,84.75L581.10,81.85" fill="none" stroke="#a19f9d" stroke-width="1.2"/>
<text x="594" y="85.2" font-size="14.5" fill="#a19f9d">A</text><rect x="592.2" y="87.2" width="15.6" height="3.5" fill="#a19f9d"/><path d="M614.60,81.85L617.40,84.75L620.20,81.85" fill="none" stroke="#a19f9d" stroke-width="1.2"/>
<rect x="645.2" y="43.4" width="2.4" height="2.4" fill="#a19f9d"/><path d="M650.2,44.6H660.2" stroke="#a19f9d" stroke-width="1.1"/>
<rect x="645.2" y="49.199999999999996" width="2.4" height="2.4" fill="#a19f9d"/><path d="M650.2,50.4H660.2" stroke="#a19f9d" stroke-width="1.1"/>
<rect x="645.2" y="55.4" width="2.4" height="2.4" fill="#a19f9d"/><path d="M650.2,56.6H660.2" stroke="#a19f9d" stroke-width="1.1"/>
<path d="M667.70,50.05L670.50,52.95L673.30,50.05" fill="none" stroke="#a19f9d" stroke-width="1.2"/>
<text x="683.2" y="46.6" font-size="5.5" fill="#a19f9d">1</text><path d="M688.6,44.6H699.3" stroke="#a19f9d" stroke-width="1.1"/>
<text x="683.2" y="52.4" font-size="5.5" fill="#a19f9d">2</text><path d="M688.6,50.4H699.3" stroke="#a19f9d" stroke-width="1.1"/>
<text x="683.2" y="58.6" font-size="5.5" fill="#a19f9d">3</text><path d="M688.6,56.6H699.3" stroke="#a19f9d" stroke-width="1.1"/>
<path d="M706.70,50.05L709.50,52.95L712.30,50.05" fill="none" stroke="#a19f9d" stroke-width="1.2"/>
<path d="M731,44.6H745.2" stroke="#a19f9d" stroke-width="1.1"/><path d="M731,56.6H745.2" stroke="#a19f9d" stroke-width="1.1"/><path d="M737.8,50.6H745.2" stroke="#a19f9d" stroke-width="1.1"/><path d="M731.2,50.6H736.2M733.2,48.6L731.2,50.6L733.2,52.6" stroke="#a19f9d" stroke-width="1" fill="none"/>
<path d="M755,44.6H769.2" stroke="#a19f9d" stroke-width="1.1"/><path d="M755,56.6H769.2" stroke="#a19f9d" stroke-width="1.1"/><path d="M761.8,50.6H769.2" stroke="#a19f9d" stroke-width="1.1"/><path d="M755,50.6H760M758,48.6L760,50.6L758,52.6" stroke="#a19f9d" stroke-width="1" fill="none"/>
<path d="M790.5,44.6H801.2" stroke="#a19f9d" stroke-width="1.1"/><path d="M790.5,50.6H801.2" stroke="#a19f9d" stroke-width="1.1"/><path d="M790.5,56.6H801.2" stroke="#a19f9d" stroke-width="1.1"/><path d="M786.3,44V57.2M784.4,46L786.3,44L788.2,46M784.4,55.2L786.3,57.2L788.2,55.2" stroke="#a19f9d" stroke-width="1" fill="none"/><path d="M805.80,50.05L808.60,52.95L811.40,50.05" fill="none" stroke="#a19f9d" stroke-width="1.2"/>
<path d="M646,76.8H660.2" stroke="#a19f9d" stroke-width="1.1"/><path d="M646,84.4H660.2" stroke="#a19f9d" stroke-width="1.1"/><path d="M646,80.6H656.2" stroke="#a19f9d" stroke-width="1.1"/><path d="M646,88.2H656.2" stroke="#a19f9d" stroke-width="1.1"/>
<path d="M670,76.8H684.2" stroke="#a19f9d" stroke-width="1.1"/><path d="M670,84.4H684.2" stroke="#a19f9d" stroke-width="1.1"/><path d="M672,80.6H682.2" stroke="#a19f9d" stroke-width="1.1"/><path d="M672,88.2H682.2" stroke="#a19f9d" stroke-width="1.1"/>
<path d="M694,76.8H708.2" stroke="#a19f9d" stroke-width="1.1"/><path d="M694,84.4H708.2" stroke="#a19f9d" stroke-width="1.1"/><path d="M698,80.6H708.2" stroke="#a19f9d" stroke-width="1.1"/><path d="M698,88.2H708.2" stroke="#a19f9d" stroke-width="1.1"/>
<path d="M718,76.8H732.2" stroke="#a19f9d" stroke-width="1.1"/><path d="M718,80.6H732.2" stroke="#a19f9d" stroke-width="1.1"/><path d="M718,84.4H732.2" stroke="#a19f9d" stroke-width="1.1"/><path d="M718,88.2H732.2" stroke="#a19f9d" stroke-width="1.1"/>
<path d="M750,79.2H755.4" stroke="#a19f9d" stroke-width="1.1"/><path d="M750,82.6H755.4" stroke="#a19f9d" stroke-width="1.1"/><path d="M750,86H755.4" stroke="#a19f9d" stroke-width="1.1"/><path d="M757.2,79.2H762.4" stroke="#a19f9d" stroke-width="1.1"/><path d="M757.2,82.6H762.4" stroke="#a19f9d" stroke-width="1.1"/><path d="M757.2,86H762.4" stroke="#a19f9d" stroke-width="1.1"/><path d="M768.90,81.85L771.70,84.75L774.50,81.85" fill="none" stroke="#a19f9d" stroke-width="1.2"/>
<path d="M825.2,36V50.6M823,48.4L825.2,50.6L827.4,48.4M833.6,44.6V50.6M831.4,48.4L833.6,50.6L835.8,48.4" stroke="#a19f9d" stroke-width="1" fill="none"/><text x="830" y="42.4" font-size="8.5" fill="#a19f9d">A</text><path d="M916.00,42.05L918.80,44.95L921.60,42.05" fill="none" stroke="#a19f9d" stroke-width="1.2"/>
<path d="M825.2,59.6H821.6V72.8H825.2M832.4,59.6H836.2V72.8H832.4" fill="none" stroke="#a19f9d" stroke-width="1.1"/><path d="M823.4,66.2H834.4M828.9,59.8V64.4M827.1,61.4L828.9,59.6L830.7,61.4M828.9,68V72.6M827.1,71L828.9,72.8L830.7,71" stroke="#a19f9d" stroke-width="0.9" fill="none"/><path d="M896.00,66.15L898.80,69.05L901.60,66.15" fill="none" stroke="#a19f9d" stroke-width="1.2"/>
<path d="M821.4,85.4H831.6L834.6,88.2H826.4L823.8,91Z" fill="#a19f9d" opacity="0.8"/><rect x="827.6" y="89.6" width="9" height="7.4" fill="#f3f2f1" stroke="#a19f9d" stroke-width="1"/><path d="M829.4,92H830.6M831.8,92H835M829.4,94.6H830.6M831.8,94.6H835" stroke="#a19f9d" stroke-width="0.9"/><path d="M949.80,90.05L952.60,92.95L955.40,90.05" fill="none" stroke="#a19f9d" stroke-width="1.2"/>
<rect x="985.5" y="39.5" width="13" height="11" fill="#f7f6f5" stroke="#3b3a39" stroke-width="1"/><text x="988.4" y="48.8" font-size="9.5" fill="#3d8ad3" font-weight="bold">A</text><rect x="984.5" y="38.5" width="2" height="2" fill="#fff" stroke="#155a96" stroke-width="1"/><rect x="997.5" y="38.5" width="2" height="2" fill="#fff" stroke="#155a96" stroke-width="1"/><rect x="984.5" y="49.5" width="2" height="2" fill="#fff" stroke="#155a96" stroke-width="1"/><rect x="997.5" y="49.5" width="2" height="2" fill="#fff" stroke="#155a96" stroke-width="1"/><path d="M1004.4,37.6L1019.6,52.4" stroke="#3b3a39" stroke-width="1.05"/><path d="M1024.4,37.6L1039.2,52M1039.4,47.4V52.2H1034.6" stroke="#3b3a39" stroke-width="1.05" fill="none"/><rect x="1044.5" y="39.5" width="15" height="11" fill="#f8f8f8" stroke="#3b3a39" stroke-width="1"/><ellipse cx="1072" cy="44.9" rx="7.6" ry="5.6" fill="none" stroke="#3b3a39" stroke-width="1.05"/><rect x="1084.5" y="39.5" width="15" height="11" rx="2.6" fill="#f8f8f8" stroke="#3b3a39" stroke-width="1"/><path d="M992,58.4L999.2,72H984.8Z" fill="none" stroke="#3b3a39" stroke-width="1.05"/><path d="M1004.6,58.4H1011.6V71.6H1019.4" fill="none" stroke="#3b3a39" stroke-width="1.05"/><path d="M1024.6,58.4H1031.6V71.6H1039M1036.6,69.2L1039.2,71.6L1036.6,74" fill="none" stroke="#3b3a39" stroke-width="1.05"/><path d="M1044.6,62H1052V58.6L1059.2,65L1052,71.4V68H1044.6Z" fill="none" stroke="#3b3a39" stroke-width="1.05"/><path d="M1069,58H1075V65.6H1078.4L1072,72.6L1065.6,65.6H1069Z" fill="none" stroke="#3b3a39" stroke-width="1.05"/><path d="M1084.6,72V61Q1084.8,58.6 1087.4,58.4H1096.4Q1093,62.6 1096,64.6Q1098.8,65 1099.2,68.6V72Z" fill="none" stroke="#3b3a39" stroke-width="1.05"/><path d="M986.6,79.6Q984.4,87.4 990.6,87.6Q997,86 997,81.6Q996,78.8 992.6,80.6Q986.6,85.4 990.6,90.6Q995,93.6 998.6,89.6" fill="none" stroke="#3b3a39" stroke-width="1.05"/><path d="M1004.6,79.2Q1017.6,79.6 1019,92.4" fill="none" stroke="#3b3a39" stroke-width="1.05"/><path d="M1024.8,86.6Q1028.4,74.6 1032,85.2Q1035.6,95.6 1039.4,90" fill="none" stroke="#3b3a39" stroke-width="1.05"/><path d="M1054.4,78.4Q1051.6,78.4 1051.6,80.6V83.4Q1051.6,85.2 1049.6,85.4Q1051.6,85.6 1051.6,87.4V90.2Q1051.6,92.4 1054.4,92.4" fill="none" stroke="#3b3a39" stroke-width="1.05"/><path d="M1069.6,78.4Q1072.4,78.4 1072.4,80.6V83.4Q1072.4,85.2 1074.4,85.4Q1072.4,85.6 1072.4,87.4V90.2Q1072.4,92.4 1069.6,92.4" fill="none" stroke="#3b3a39" stroke-width="1.05"/><polygon points="1091.9,78.5 1093.7,83.5 1098.9,83.6 1094.8,86.8 1096.2,91.9 1091.9,88.9 1087.6,91.9 1089.0,86.8 1084.9,83.6 1090.1,83.5" fill="none" stroke="#3b3a39" stroke-width="1.05"/><path d="M1108.10,45.20L1110.40,42.80L1112.70,45.20" fill="none" stroke="#b5b3b1" stroke-width="1"/><path d="M1108.10,63.40L1110.40,65.80L1112.70,63.40" fill="none" stroke="#3b3a39" stroke-width="1.1"/><path d="M1108,81.4H1112.8" stroke="#3b3a39" stroke-width="1"/><path d="M1108.10,84.20L1110.40,86.60L1112.70,84.20" fill="none" stroke="#3b3a39" stroke-width="1.1"/>
<rect x="1134.6" y="40.4" width="19" height="19" fill="#F7B895" stroke="#ED6C30" stroke-width="1.2"/>
<rect x="1130.7" y="36.7" width="10.8" height="10.8" fill="#fafafa" stroke="#3b3a39" stroke-width="1.1"/><rect x="1146.6" y="52.8" width="10.8" height="10.6" fill="#fafafa" stroke="#3b3a39" stroke-width="1.1"/>
<path d="M1140.80,91.05L1143.60,93.95L1146.40,91.05" fill="none" stroke="#3b3a39" stroke-width="1.2"/>
<rect x="1177.8" y="36.7" width="26.6" height="26.4" rx="1.5" fill="#e9e8e7" stroke="#a19f9d" stroke-width="1"/>
<path d="M1206.3,46.4Q1207.2,47.2 1206,48.6L1196,60.2L1193.6,58.4L1204,46.8Q1205.4,45.6 1206.3,46.4Z" fill="#e9e8e7" stroke="#a19f9d" stroke-width="1"/><path d="M1193.4,58.6Q1196,59 1196.2,61.2Q1194,65.2 1185.4,64.6Q1189.6,63 1190,60.6Q1191,58.4 1193.4,58.6Z" fill="#c4c2c0" stroke="#a19f9d" stroke-width="0.8"/>
<path d="M1203.40,90.85L1206.20,93.75L1209.00,90.85" fill="none" stroke="#a19f9d" stroke-width="1.2"/>
<path d="M1224.6,36.2L1229.8,41.4L1224.2,45L1219.8,40Z" fill="none" stroke="#a19f9d" stroke-width="1"/><path d="M1223.8,38V34.6Q1225.4,33.4 1226.6,34.8V38.4" fill="none" stroke="#a19f9d" stroke-width="0.9"/><path d="M1228.6,38Q1231.6,39.6 1231,43.6" fill="none" stroke="#a19f9d" stroke-width="0.9"/><rect x="1217.3" y="46.2" width="15.6" height="3.5" fill="#a19f9d"/><path d="M1289.60,41.05L1292.40,43.95L1295.20,41.05" fill="none" stroke="#a19f9d" stroke-width="1.2"/>
<path d="M1226,58.8H1218.4V67.2H1223" fill="none" stroke="#a19f9d" stroke-width="1"/><path d="M1223.2,66.6L1224,63.6L1230.2,57.6Q1231.4,56.8 1232.2,57.8Q1232.8,58.8 1232,59.8L1226,65.6Z" fill="none" stroke="#a19f9d" stroke-width="0.9"/><rect x="1217.3" y="69.4" width="15.6" height="3.5" fill="#a19f9d"/><path d="M1313.60,64.15L1316.40,67.05L1319.20,64.15" fill="none" stroke="#a19f9d" stroke-width="1.2"/>
<path d="M1220.6,82.6H1230.2Q1232.6,82.6 1232.2,84.6L1230.2,91.4Q1229.6,93.2 1227.6,93.2H1219.4Q1217,93 1217.6,91L1219.4,88.6Z" fill="#e1dfdd" stroke="#a19f9d" stroke-width="1"/><path d="M1218.2,89.4H1228.6L1231.6,83.4" fill="none" stroke="#a19f9d" stroke-width="0.9"/><path d="M1309.70,87.35L1312.50,90.25L1315.30,87.35" fill="none" stroke="#a19f9d" stroke-width="1.2"/>
<circle cx="1355.6" cy="39.8" r="4.7" fill="none" stroke="#3b3a39" stroke-width="1.1"/><path d="M1352.2,43.4L1346.2,49.2" stroke="#3b3a39" stroke-width="1.2"/>
<text x="1350.6" y="63.4" font-size="8.5" fill="#a19f9d">b</text><text x="1354.4" y="73.6" font-size="9.5" fill="#2E86C7">c</text><path d="M1349.4,61.6Q1345,63 1346,67.4Q1347.6,70 1352.2,69.6M1350,67.2L1352.4,69.6L1350,72" fill="none" stroke="#2E86C7" stroke-width="1"/><path d="M1415.50,64.15L1418.30,67.05L1421.10,64.15" fill="none" stroke="#3b3a39" stroke-width="1.2"/>
<path d="M1347.7,82V94.6L1351,91.4L1353.4,96L1355.2,95.2L1353,90.6L1357.2,90.4Z" fill="#f7f6f5" stroke="#3b3a39" stroke-width="1" stroke-linejoin="round"/><path d="M1398.60,87.35L1401.40,90.25L1404.20,87.35" fill="none" stroke="#3b3a39" stroke-width="1.2"/>
<rect x="1459.2" y="35" width="10.6" height="20.4" rx="5.3" fill="#5ea5dc" stroke="#2E86C7" stroke-width="1"/><path d="M1455.6,51.6Q1456,59.6 1464.6,59.8Q1473.2,59.6 1473.8,51.6M1464.6,59.8V64.4" fill="none" stroke="#3b3a39" stroke-width="1.1"/>
<path d="M1461.70,91.05L1464.50,93.95L1467.30,91.05" fill="none" stroke="#3b3a39" stroke-width="1.2"/>
<rect x="1509.5" y="39.5" width="27" height="21" fill="none" stroke="#3b3a39" stroke-width="1"/><rect x="1511.5" y="41.5" width="23" height="17" fill="#fafafa" stroke="#3b3a39" stroke-width="1"/><path d="M1511.5,47.5H1534.5M1527.5,47.5V58.5" stroke="#3b3a39" stroke-width="1"/>
<path d="M1512.8,34.4H1519.7L1516.7,41.5H1520L1507.3,53.8L1511.9,44.3H1507.6Z" fill="#f3f2f1" stroke="#f3f2f1" stroke-width="3.4" stroke-linejoin="round"/><path d="M1512.8,34.4H1519.7L1516.7,41.5H1520L1507.3,53.8L1511.9,44.3H1507.6Z" fill="#fbbf9c" stroke="#ED6C30" stroke-width="1" stroke-linejoin="miter"/>
<path d="M1740.6,12H1735.4V18.4H1745V15.4" fill="none" stroke="#BC4A22" stroke-width="1.1"/><path d="M1738.4,15.6Q1738.8,11 1744.8,10.6M1742.6,8L1745.6,10.6L1742.6,13.2" fill="none" stroke="#BC4A22" stroke-width="1.1"/>
<path d="M1811.9,8.5H1821.7V15.7H1815.6L1813.4,17.7V15.7H1811.9Z" fill="none" stroke="#BC4A22" stroke-width="1.1"/>
<path d="M1897.10,119.80L1901.60,115.00L1906.10,119.80" fill="none" stroke="#444" stroke-width="1.3"/></svg>
<svg class="abs" style="left:0;top:120px" width="1913" height="882" viewBox="0 120 1913 882" font-family="Liberation Sans, sans-serif"><path d="M97.6,988.2V997.2M91.6,988.2H103.6V997.2H100M91.6,988.2V997.2H96" fill="none" stroke="#444" stroke-width="1"/><path d="M96.6,996.4L98.8,998.8L102.6,994.6" fill="none" stroke="#444" stroke-width="1"/>
<path d="M1481,991.6H1496.6M1481,995.2H1496.6M1481,998.8H1496.6" stroke="#444" stroke-width="1"/><path d="M1486.30,988.50L1488.80,985.90L1491.30,988.50" fill="none" stroke="#444" stroke-width="1"/>
<rect x="1561.6" y="987.3" width="13.4" height="10.8" fill="none" stroke="#444" stroke-width="1"/><path d="M1564.2,987.3V998.1" stroke="#444" stroke-width="1"/><rect x="1566.4" y="989.6" width="6.2" height="3.6" fill="none" stroke="#444" stroke-width="1"/>
<rect x="1601.4" y="987.3" width="5.2" height="4.2" fill="none" stroke="#444" stroke-width="1"/>
<rect x="1609.6" y="987.3" width="5.2" height="4.2" fill="none" stroke="#444" stroke-width="1"/>
<rect x="1601.4" y="994.2" width="5.2" height="4.2" fill="none" stroke="#444" stroke-width="1"/>
<rect x="1609.6" y="994.2" width="5.2" height="4.2" fill="none" stroke="#444" stroke-width="1"/>
<path d="M1647.9,988.6V998.6M1647.9,988.6Q1644.6,986.6 1641.6,987.4V997.4Q1644.6,996.8 1647.9,998.6Q1651.2,996.8 1654.2,997.4V987.4Q1651.2,986.6 1647.9,988.6" fill="none" stroke="#444" stroke-width="1"/><path d="M1643.4,990H1646M1643.4,992.2H1646M1643.4,994.4H1646M1649.8,990H1652.4M1649.8,992.2H1652.4M1649.8,994.4H1652.4" stroke="#444" stroke-width="0.7"/>
<path d="M1681.4,986.8H1693.8M1682.8,986.8V992.6H1692.4V986.8M1687.6,992.6V998.2M1684.6,998.4H1690.6" fill="none" stroke="#444" stroke-width="1"/>
<path d="M1713.8,992.7H1721.6" stroke="#444" stroke-width="1"/><path d="M1727,992.7H1826.6" stroke="#8a8886" stroke-width="1"/><path d="M1777.8,990.6V994.8" stroke="#8a8886" stroke-width="1"/><rect x="1781.6" y="987.8" width="5.2" height="11.2" fill="#605e5c"/><path d="M1832.2,992.7H1840M1836.1,988.8V996.6" stroke="#444" stroke-width="1"/>
<rect x="1899.2" y="989.4" width="6.6" height="6.6" fill="none" stroke="#444" stroke-width="1"/><path d="M1900.4,987.2L1902.5,985.4L1904.6,987.2M1900.4,998.2L1902.5,1000L1904.6,998.2M1897,990.6L1895.2,992.7L1897,994.8M1908,990.6L1909.8,992.7L1908,994.8" fill="none" stroke="#444" stroke-width="0.9"/>
<path d="M281.9,136.60000000000002L285.5,133.0L289.1,136.60000000000002Z" fill="#605e5c"/>
<path d="M281.9,970.8000000000001L285.5,974.4L289.1,970.8000000000001Z" fill="#605e5c"/>
<path d="M1902.9,136.8L1906.5,133.2L1910.1,136.8Z" fill="#605e5c"/>
<path d="M1902.9,869.2L1906.5,872.8L1910.1,869.2Z" fill="#605e5c"/>
<path d="M1903.6,885.6L1906.5,882.6L1909.4,885.6Z M1903.6,889.6L1906.5,886.6L1909.4,889.6Z" fill="#605e5c"/><path d="M1903.6,901.6L1906.5,904.6L1909.4,901.6Z M1903.6,905.6L1906.5,908.6L1909.4,905.6Z" fill="#605e5c"/></svg>
<span id="t0" class="t" style="left:11.24px;top:5.60px;font-size:12.7px;color:#444;letter-spacing:-0.225px;">File</span>
<span id="t1" class="t" style="left:127.54px;top:5.60px;font-size:12.7px;color:#444;letter-spacing:0.153px;">Insert</span>
<span id="t2" class="t" style="left:188.54px;top:5.60px;font-size:12.7px;color:#444;letter-spacing:0.159px;">Design</span>
<span id="t3" class="t" style="left:257.84px;top:5.60px;font-size:12.7px;color:#444;letter-spacing:0.026px;">Transitions</span>
<span id="t4" class="t" style="left:350.54px;top:5.60px;font-size:12.7px;color:#444;letter-spacing:0.179px;">Animations</span>
<span id="t5" class="t" style="left:445.24px;top:5.60px;font-size:12.7px;color:#444;letter-spacing:0.067px;">Slide Show</span>
<span id="t6" class="t" style="left:537.24px;top:5.60px;font-size:12.7px;color:#444;letter-spacing:-0.143px;">Review</span>
<span id="t7" class="t" style="left:605.44px;top:5.60px;font-size:12.7px;color:#444;letter-spacing:-0.112px;">View</span>
<span id="t8" class="t" style="left:660.34px;top:5.60px;font-size:12.7px;color:#444;letter-spacing:0.290px;">Recording</span>
<span id="t9" class="t" style="left:748.34px;top:5.60px;font-size:12.7px;color:#444;letter-spacing:0.315px;">Help</span>
<span id="t10" class="t" style="left:62.84px;top:5.60px;font-size:12.7px;color:#3b3a39;letter-spacing:0.877px;-webkit-text-stroke:0.35px #3b3a39;">Home</span>
<span id="t11" class="t" style="left:1750.44px;top:5.80px;font-size:12.7px;color:#BC4A22;letter-spacing:0.179px;">Share</span>
<span id="t12" class="t" style="left:1826.64px;top:5.80px;font-size:12.7px;color:#BC4A22;letter-spacing:0.639px;">Comments</span>
<span id="t13" class="t" style="left:10.00px;top:68.65px;font-size:11.7px;color:#3b3a39;letter-spacing:-0.343px;">Paste</span>
<span id="t14" class="t" style="left:66.90px;top:35.85px;font-size:11.7px;color:#3b3a39;letter-spacing:0.291px;">Cut</span>
<span id="t15" class="t" style="left:66.90px;top:59.95px;font-size:11.7px;color:#3b3a39;letter-spacing:0.120px;">Copy</span>
<span id="t16" class="t" style="left:66.90px;top:83.65px;font-size:11.7px;color:#3b3a39;letter-spacing:0.063px;">Format Painter</span>
<span id="t17" class="t" style="left:43.70px;top:108.35px;font-size:11.7px;color:#444444;letter-spacing:0.116px;">Clipboard</span>
<span id="t18" class="t" style="left:177.00px;top:68.55px;font-size:11.7px;color:#3b3a39;letter-spacing:0.229px;">New</span>
<span id="t19" class="t" style="left:170.30px;top:84.55px;font-size:11.7px;color:#3b3a39;letter-spacing:0.056px;">Slide</span>
<span id="t20" class="t" style="left:214.90px;top:68.55px;font-size:11.7px;color:#3b3a39;letter-spacing:-0.464px;">Reuse</span>
<span id="t21" class="t" style="left:215.60px;top:84.55px;font-size:11.7px;color:#3b3a39;letter-spacing:-0.244px;">Slides</span>
<span id="t22" class="t" style="left:273.90px;top:35.85px;font-size:11.7px;color:#3b3a39;letter-spacing:0.231px;">Layout</span>
<span id="t23" class="t" style="left:273.90px;top:59.95px;font-size:11.7px;color:#3b3a39;letter-spacing:-0.534px;">Reset</span>
<span id="t24" class="t" style="left:273.90px;top:83.65px;font-size:11.7px;color:#3b3a39;letter-spacing:-0.058px;">Section</span>
<span id="t25" class="t" style="left:233.90px;top:108.35px;font-size:11.7px;color:#444444;letter-spacing:-0.328px;">Slides</span>
<span id="t26" class="t" style="left:465.80px;top:108.35px;font-size:11.7px;color:#444444;letter-spacing:0.247px;">Font</span>
<span id="t27" class="t" style="left:839.90px;top:35.85px;font-size:11.7px;color:#a8a6a4;letter-spacing:-0.009px;">Text Direction</span>
<span id="t28" class="t" style="left:839.90px;top:59.95px;font-size:11.7px;color:#a8a6a4;letter-spacing:0.051px;">Align Text</span>
<span id="t29" class="t" style="left:839.90px;top:83.65px;font-size:11.7px;color:#a8a6a4;letter-spacing:0.179px;">Convert to SmartArt</span>
<span id="t30" class="t" style="left:767.90px;top:108.35px;font-size:11.7px;color:#444444;letter-spacing:-0.202px;">Paragraph</span>
<span id="t31" class="t" style="left:1122.80px;top:68.55px;font-size:11.7px;color:#3b3a39;letter-spacing:0.155px;">Arrange</span>
<span id="t32" class="t" style="left:1174.90px;top:68.55px;font-size:11.7px;color:#a8a6a4;letter-spacing:0.237px;">Quick</span>
<span id="t33" class="t" style="left:1169.60px;top:84.55px;font-size:11.7px;color:#a8a6a4;letter-spacing:-0.158px;">Styles</span>
<span id="t34" class="t" style="left:1235.70px;top:34.65px;font-size:11.7px;color:#a8a6a4;letter-spacing:-0.161px;">Shape Fill</span>
<span id="t35" class="t" style="left:1235.70px;top:57.75px;font-size:11.7px;color:#a8a6a4;letter-spacing:0.046px;">Shape Outline</span>
<span id="t36" class="t" style="left:1235.70px;top:80.85px;font-size:11.7px;color:#a8a6a4;letter-spacing:-0.193px;">Shape Effects</span>
<span id="t37" class="t" style="left:1122.80px;top:108.35px;font-size:11.7px;color:#444444;letter-spacing:0.143px;">Drawing</span>
<span id="t38" class="t" style="left:1364.10px;top:34.65px;font-size:11.7px;color:#3b3a39;letter-spacing:-0.018px;">Find</span>
<span id="t39" class="t" style="left:1364.10px;top:57.75px;font-size:11.7px;color:#3b3a39;letter-spacing:-0.259px;">Replace</span>
<span id="t40" class="t" style="left:1364.10px;top:80.85px;font-size:11.7px;color:#3b3a39;letter-spacing:-0.301px;">Select</span>
<span id="t41" class="t" style="left:1365.90px;top:108.35px;font-size:11.7px;color:#444444;letter-spacing:0.161px;">Editing</span>
<span id="t42" class="t" style="left:1445.80px;top:68.55px;font-size:11.7px;color:#3b3a39;letter-spacing:0.170px;">Dictate</span>
<span id="t43" class="t" style="left:1450.80px;top:108.35px;font-size:11.7px;color:#444444;letter-spacing:-0.515px;">Voice</span>
<span id="t44" class="t" style="left:1505.00px;top:68.55px;font-size:11.7px;color:#3b3a39;letter-spacing:-0.136px;">Design</span>
<span id="t45" class="t" style="left:1508.60px;top:84.55px;font-size:11.7px;color:#3b3a39;letter-spacing:-0.203px;">Ideas</span>
<span id="t46" class="t" style="left:1500.10px;top:108.35px;font-size:11.7px;color:#444444;letter-spacing:-0.125px;">Designer</span>
<span id="t47" class="t" style="left:2.90px;top:985.35px;font-size:11.7px;color:#444;letter-spacing:-0.177px;">Slide 1 of 45</span>
<span id="t48" class="t" style="left:122.80px;top:985.35px;font-size:11.7px;color:#444;letter-spacing:-0.156px;">English (Australia)</span>
<span id="t49" class="t" style="left:1499.10px;top:985.55px;font-size:11.7px;color:#444;letter-spacing:-0.154px;">Notes</span>
<span id="t50" class="t" style="left:1852.40px;top:985.55px;font-size:11.7px;color:#444;letter-spacing:-0.673px;">142 %</span>
<span id="t51" class="t" style="left:8.21px;top:142.23px;font-size:13.2px;color:#BC4A22;letter-spacing:-0.700px;">1</span>
<span id="t52" class="t" style="left:7.21px;top:290.73px;font-size:13.2px;color:#444;letter-spacing:-0.700px;">2</span>
<span id="t53" class="t" style="left:7.21px;top:439.73px;font-size:13.2px;color:#444;letter-spacing:-0.700px;">3</span>
<span id="t54" class="t" style="left:7.21px;top:588.73px;font-size:13.2px;color:#444;letter-spacing:-0.700px;">4</span>
<span id="t55" class="t" style="left:7.21px;top:737.73px;font-size:13.2px;color:#444;letter-spacing:-0.700px;">5</span>
<span id="t56" class="t" style="left:7.21px;top:886.73px;font-size:13.2px;color:#444;letter-spacing:-0.700px;">6</span>
</body></html>
